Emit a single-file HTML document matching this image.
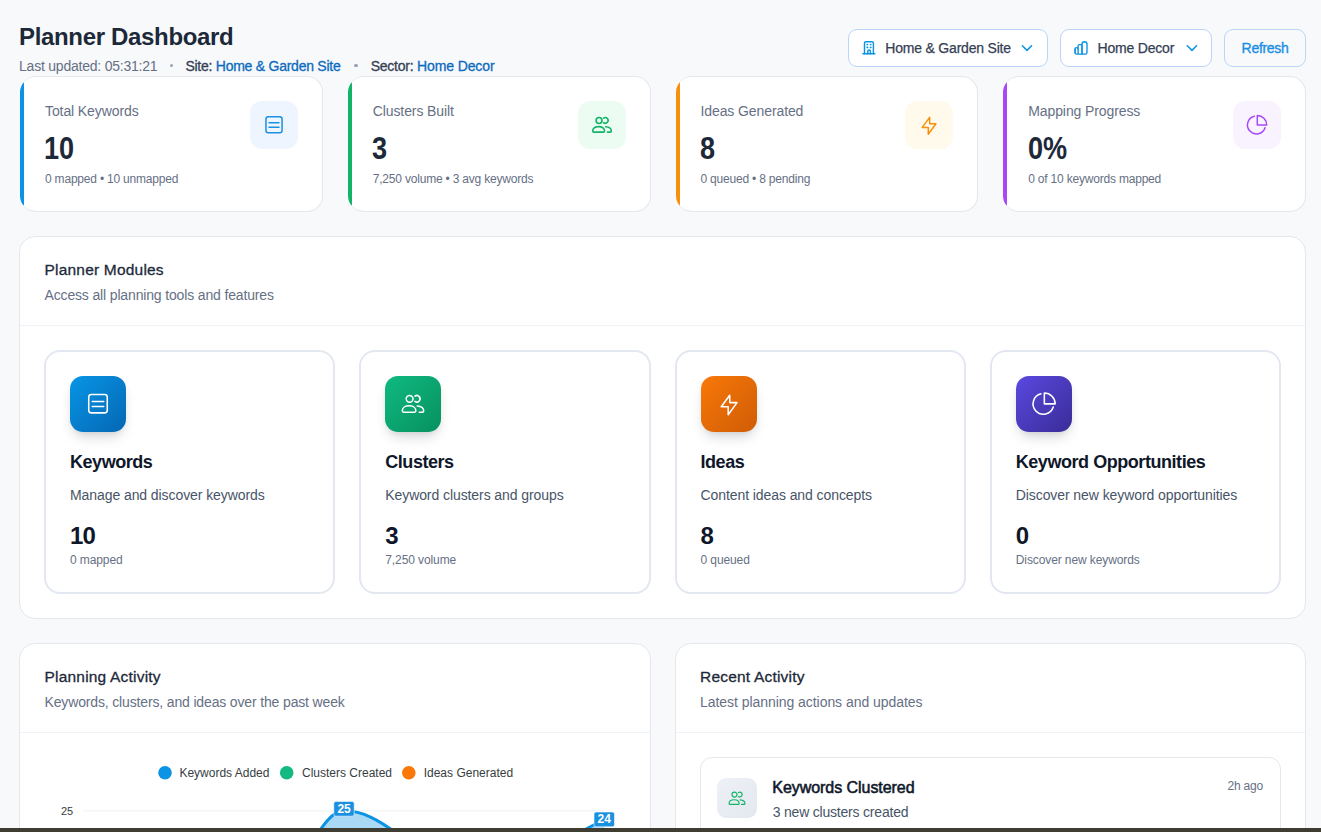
<!DOCTYPE html>
<html><head><meta charset="utf-8">
<style>
*{box-sizing:border-box;margin:0;padding:0}
html,body{width:1321px;height:832px;overflow:hidden}
body{background:#f8f9fb;font-family:"Liberation Sans",sans-serif;position:relative;color:#1d2939}
.a{position:absolute;white-space:nowrap;line-height:1}
.card{position:absolute;background:#fff;border:1px solid #e4e7ec}
.btn{position:absolute;top:29px;height:38px;border:1px solid #bcd4fb;border-radius:9px;background:#fff}
.ic{fill:none;stroke-linecap:round;stroke-linejoin:round}
.btxt{position:absolute;top:41.2px;font-size:14px;color:#344054;letter-spacing:-0.2px;-webkit-text-stroke:0.25px #344054;line-height:1;white-space:nowrap}
.med{-webkit-text-stroke:0.3px currentColor}
.stat{top:76px;width:302.75px;height:136px;border-radius:16px;border-left-width:0;overflow:hidden}
.stat .bar{position:absolute;left:0;top:-1px;bottom:-1px;width:4px}
.stat .lbl{left:25px;top:27.15px;font-size:14px;color:#667085;letter-spacing:-0.1px}
.stat .val{left:24.4px;top:56.2px;font-size:31.5px;font-weight:bold;color:#1d2939;letter-spacing:0;transform:scaleX(0.86);transform-origin:0 0}
.stat .sub{left:25px;top:95.9px;font-size:12px;color:#667085;letter-spacing:-0.2px}
.stat .ib{position:absolute;right:24px;top:24px;width:48px;height:48px;border-radius:12px}
.stat .ib svg,.mod .ib svg{position:absolute;left:0;top:0}
.panel{border-radius:16px}
.ph{font-size:15.5px;color:#1d2939;letter-spacing:0.2px;-webkit-text-stroke:0.3px #1d2939}
.ps{font-size:14px;color:#667085;letter-spacing:-0.15px}
.div{position:absolute;left:0;right:0;height:1px;background:#f0f2f5}
.mod{position:absolute;top:113px;width:291.25px;height:244px;border:2px solid #e3e8f0;border-radius:16px;background:#fff}
.mod .ib{position:absolute;left:24px;top:24px;width:56px;height:56px;border-radius:13px;box-shadow:0 8px 14px -4px rgba(16,24,40,.18),0 3px 6px -2px rgba(16,24,40,.08)}
.mod .t{left:24px;top:100.8px;font-size:18px;font-weight:bold;color:#0f172a;letter-spacing:-0.45px}
.mod .d{left:24px;top:135.65px;font-size:14px;color:#475467;letter-spacing:-0.08px}
.mod .v{left:24px;top:172.3px;font-size:24px;font-weight:bold;color:#0f172a;letter-spacing:-0.8px}
.mod .s{left:24px;top:202.4px;font-size:12px;color:#667085;letter-spacing:-0.1px}
</style></head><body>
<svg width="0" height="0" style="position:absolute">
<defs>
<g id="i-doc"><rect x="-8.05" y="-8.2" width="16.1" height="15.9" rx="2.3"/><path d="M-5 -2.2H5M-5 2.2H5"/></g>
<g id="i-users"><circle cx="-2.95" cy="-4.5" r="2.95"/><path d="M1.69 -6.84A2.8 2.8 0 1 1 1.69 -2.26"/><path d="M-8.1 7.1H1.3Q2.5 7.1 2.5 5.9C2.5 3.2 -0.2 1.6 -3.4 1.6C-6.6 1.6 -9.3 3.2 -9.3 5.9Q-9.3 7.1 -8.1 7.1Z"/><path d="M3.7 1.7C6.9 1.9 9.3 3.6 9.3 6.0Q9.3 7.1 8.2 7.1H5.4"/></g>
<g id="i-bolt"><path d="M0.6 -7.65L-6.75 2.4H-0.7V9.3L6.95 -1.2H0.75Z"/></g>
<g id="i-pie"><path d="M0.3 -9.5A9.4 9.4 0 0 1 9.7 -0.1H0.3Z"/><path d="M8.06 2.68A9 9 0 1 1 -2.68 -8.83"/></g>
</defs></svg>

<!-- header -->
<div class="a" style="left:19px;top:25.1px;font-size:24px;font-weight:bold;color:#1d2939;letter-spacing:-0.33px">Planner Dashboard</div>
<div class="a" style="left:19px;top:59.2px;font-size:14px;color:#667085;letter-spacing:-0.22px">Last updated: 05:31:21</div>
<div style="position:absolute;left:169.6px;top:64.1px;width:3.4px;height:3.4px;border-radius:50%;background:#98a2b3"></div>
<div class="a med" style="left:185.4px;top:59.2px;font-size:14px;color:#344054;letter-spacing:-0.25px">Site: <span style="color:#0b6bbd">Home &amp; Garden Site</span></div>
<div style="position:absolute;left:354.3px;top:64.1px;width:3.4px;height:3.4px;border-radius:50%;background:#98a2b3"></div>
<div class="a med" style="left:370.7px;top:59.2px;font-size:14px;color:#344054;letter-spacing:-0.25px">Sector: <span style="color:#0b6bbd;letter-spacing:-0.1px">Home Decor</span></div>

<div class="btn" style="left:848px;width:200px"></div>
<svg class="ic" style="position:absolute;left:862px;top:40px" width="14" height="15" viewBox="0 0 14 15" stroke="#0b93e4" stroke-width="1.45"><path d="M2.5 13.8V3.2A1.5 1.5 0 0 1 4 1.7H9.9A1.5 1.5 0 0 1 11.4 3.2V13.8"/><path d="M0.9 13.8H12.8"/><path d="M5.8 13.8V11.3A1.3 1.3 0 0 1 8.4 11.3V13.8"/><path d="M5.2 4.5h0.3M8.5 4.5h0.3M5.2 7.4h0.3M8.5 7.4h0.3" stroke-width="1.7"/></svg>
<div class="btxt" style="left:885.3px">Home &amp; Garden Site</div>
<svg class="ic" style="position:absolute;left:1016px;top:40px" width="22" height="16" viewBox="0 0 22 16" stroke="#0b93e4" stroke-width="1.5"><path d="M6.35 5.77L10.96 10.38L15.58 5.77"/></svg>
<div class="btn" style="left:1060px;width:152px"></div>
<svg class="ic" style="position:absolute;left:1070px;top:36px" width="22" height="22" viewBox="0 0 22 22" stroke="#0b93e4" stroke-width="1.35"><path d="M5.1 17V12.9A1.3 1.3 0 0 1 6.4 11.6H6.8A1.3 1.3 0 0 1 8.1 12.9"/><path d="M8.1 17.4V9.9A1.3 1.3 0 0 1 9.4 8.6H10.7A1.3 1.3 0 0 1 12 9.9V18.1"/><path d="M12 17.9V8.2A2.5 2.5 0 0 1 14.5 5.7A2.5 2.5 0 0 1 17 8.2V16.4A1.7 1.7 0 0 1 15.3 18.1H6.8A1.7 1.7 0 0 1 5.1 16.4V12.9"/></svg>
<div class="btxt" style="left:1097.6px">Home Decor</div>
<svg class="ic" style="position:absolute;left:1180.6px;top:40px" width="22" height="16" viewBox="0 0 22 16" stroke="#0b93e4" stroke-width="1.5"><path d="M6.35 5.77L10.96 10.38L15.58 5.77"/></svg>
<div class="btn" style="left:1224px;width:82px;background:#f8f9fb"></div>
<div class="btxt" style="left:1241.6px;color:#1a8fe3;-webkit-text-stroke:0.35px #1a8fe3;letter-spacing:-0.3px">Refresh</div>

<!-- stat cards -->
<div class="card stat" style="left:20px">
  <div class="bar" style="background:#0a93e4"></div>
  <div class="a lbl">Total Keywords</div>
  <div class="a val">10</div>
  <div class="a sub">0 mapped • 10 unmapped</div>
  <div class="ib" style="background:#eef5ff"><svg class="ic" width="48" height="48" viewBox="-24 -24 48 48" stroke="#1a8fe3" stroke-width="1.5"><use href="#i-doc"/></svg></div>
</div>
<div class="card stat" style="left:347.75px">
  <div class="bar" style="background:#12b467"></div>
  <div class="a lbl">Clusters Built</div>
  <div class="a val">3</div>
  <div class="a sub">7,250 volume • 3 avg keywords</div>
  <div class="ib" style="background:#edfcf3"><svg class="ic" width="48" height="48" viewBox="-24 -24 48 48" stroke="#12b467" stroke-width="1.6"><use href="#i-users"/></svg></div>
</div>
<div class="card stat" style="left:675.5px">
  <div class="bar" style="background:#f7900a"></div>
  <div class="a lbl">Ideas Generated</div>
  <div class="a val">8</div>
  <div class="a sub">0 queued • 8 pending</div>
  <div class="ib" style="background:#fffaeb"><svg class="ic" width="48" height="48" viewBox="-24 -24 48 48" stroke="#f7900a" stroke-width="1.5"><use href="#i-bolt"/></svg></div>
</div>
<div class="card stat" style="left:1003.25px">
  <div class="bar" style="background:#a747f6"></div>
  <div class="a lbl">Mapping Progress</div>
  <div class="a val">0%</div>
  <div class="a sub">0 of 10 keywords mapped</div>
  <div class="ib" style="background:#f9f3ff"><svg class="ic" width="48" height="48" viewBox="-24 -24 48 48" stroke="#a747f6" stroke-width="1.5"><use href="#i-pie"/></svg></div>
</div>

<!-- planner modules panel -->
<div class="card panel" style="left:19px;top:236px;width:1287px;height:383px">
  <div class="a ph" style="left:24.5px;top:24.68px">Planner Modules</div>
  <div class="a ps" style="left:24.5px;top:51.45px">Access all planning tools and features</div>
  <div class="div" style="top:88px"></div>
  <div class="mod" style="left:24px"><div class="ib" style="background:linear-gradient(135deg,#0895e6,#0467b3)"><svg class="ic" width="56" height="56" viewBox="-24.35 -24.35 48.7 48.7" stroke="#fff" stroke-width="1.35"><use href="#i-doc"/></svg></div>
    <div class="a t">Keywords</div><div class="a d">Manage and discover keywords</div><div class="a v">10</div><div class="a s">0 mapped</div></div>
  <div class="mod" style="left:339.25px"><div class="ib" style="background:linear-gradient(135deg,#10b981,#06915f)"><svg class="ic" width="56" height="56" viewBox="-24.35 -24.35 48.7 48.7" stroke="#fff" stroke-width="1.35"><use href="#i-users"/></svg></div>
    <div class="a t">Clusters</div><div class="a d">Keyword clusters and groups</div><div class="a v">3</div><div class="a s">7,250 volume</div></div>
  <div class="mod" style="left:654.5px"><div class="ib" style="background:linear-gradient(135deg,#f97808,#cf5c06)"><svg class="ic" width="56" height="56" viewBox="-24.35 -24.35 48.7 48.7" stroke="#fff" stroke-width="1.35"><use href="#i-bolt"/></svg></div>
    <div class="a t">Ideas</div><div class="a d">Content ideas and concepts</div><div class="a v">8</div><div class="a s">0 queued</div></div>
  <div class="mod" style="left:969.75px"><div class="ib" style="background:linear-gradient(135deg,#5a49e0,#3a2c98)"><svg class="ic" width="56" height="56" viewBox="-24.35 -24.35 48.7 48.7" stroke="#fff" stroke-width="1.35"><use href="#i-pie"/></svg></div>
    <div class="a t">Keyword Opportunities</div><div class="a d">Discover new keyword opportunities</div><div class="a v">0</div><div class="a s">Discover new keywords</div></div>
</div>

<!-- bottom panels -->
<div class="card panel" style="left:19px;top:643px;width:631.5px;height:300px">
  <div class="a ph" style="left:24.5px;top:25.38px">Planning Activity</div>
  <div class="a ps" style="left:24.5px;top:50.75px">Keywords, clusters, and ideas over the past week</div>
  <div class="div" style="top:88px"></div>
</div>
<svg style="position:absolute;left:0;top:740px" width="660" height="92" viewBox="0 740 660 92">
  <circle cx="165" cy="772.7" r="6.8" fill="#0b93e4"/>
  <circle cx="286.7" cy="772.7" r="6.8" fill="#12b981"/>
  <circle cx="408.8" cy="772.7" r="6.8" fill="#f97808"/>
  <line x1="83" y1="810.8" x2="604.5" y2="810.8" stroke="#f1f2f4" stroke-width="1"/>
  <path d="M300 860 C318 834 329 811 343.75 810.8 C361 810.6 378 818 408 842 L408 860Z" fill="#aad9f5"/>
  <path d="M300 860 C318 834 329 811 343.75 810.8 C361 810.6 378 818 408 842" fill="none" stroke="#0b93e4" stroke-width="3"/>
  <path d="M562 847 C578 833 591 824 604.5 821.4 L604.5 860 L565 860Z" fill="#aad9f5"/>
  <path d="M562 847 C578 833 591 824 604.5 821.4" fill="none" stroke="#0b93e4" stroke-width="3"/>
  <rect x="333.8" y="801.4" width="20.4" height="14.8" rx="2" fill="#1a90e0" stroke="#fff" stroke-width="0.6"/>
  <rect x="594" y="812" width="20.5" height="14.8" rx="2" fill="#1a90e0" stroke="#fff" stroke-width="0.6"/>
</svg>
<div class="a" style="left:179.4px;top:766.8px;font-size:12px;color:#373d3f">Keywords Added</div>
<div class="a" style="left:302px;top:766.8px;font-size:12px;color:#373d3f">Clusters Created</div>
<div class="a" style="left:423.7px;top:766.8px;font-size:12px;color:#373d3f">Ideas Generated</div>
<div class="a" style="left:61px;top:805.69px;font-size:11px;color:#373d3f">25</div>
<div class="a" style="left:337.4px;top:802.6px;font-size:12px;font-weight:bold;color:#fff">25</div>
<div class="a" style="left:597.6px;top:813.3px;font-size:12px;font-weight:bold;color:#fff">24</div>

<div class="card panel" style="left:674.5px;top:643px;width:631.5px;height:300px">
  <div class="a ph" style="left:24.5px;top:25.38px">Recent Activity</div>
  <div class="a ps" style="left:24.5px;top:50.75px;letter-spacing:-0.05px">Latest planning actions and updates</div>
  <div class="div" style="top:88px"></div>
  <div style="position:absolute;left:24.5px;top:113px;width:581px;height:120px;border:1px solid #e4e7ec;border-radius:12px"></div>
  <div style="position:absolute;left:41.5px;top:134px;width:40px;height:40px;border-radius:9px;background:linear-gradient(135deg,#eef1f6,#e3e8ef)"><svg class="ic" style="position:absolute;left:0;top:0" width="40" height="40" viewBox="-20 -20 40 40" stroke="#12b467" stroke-width="1.4"><use href="#i-users" transform="translate(0 0.4) scale(0.85)"/></svg></div>
  <div class="a" style="left:96.8px;top:136.3px;font-size:16px;color:#0f172a;letter-spacing:-0.05px;-webkit-text-stroke:0.55px #0f172a">Keywords Clustered</div>
  <div class="a" style="left:97.2px;top:161.15px;font-size:14px;color:#475467;letter-spacing:-0.2px">3 new clusters created</div>
  <div class="a" style="left:552px;top:136.24px;font-size:12px;color:#667085;letter-spacing:-0.2px">2h ago</div>
</div>

<div style="position:absolute;left:0;top:828px;width:1321px;height:4px;background:#3f3c31"></div>
</body></html>
